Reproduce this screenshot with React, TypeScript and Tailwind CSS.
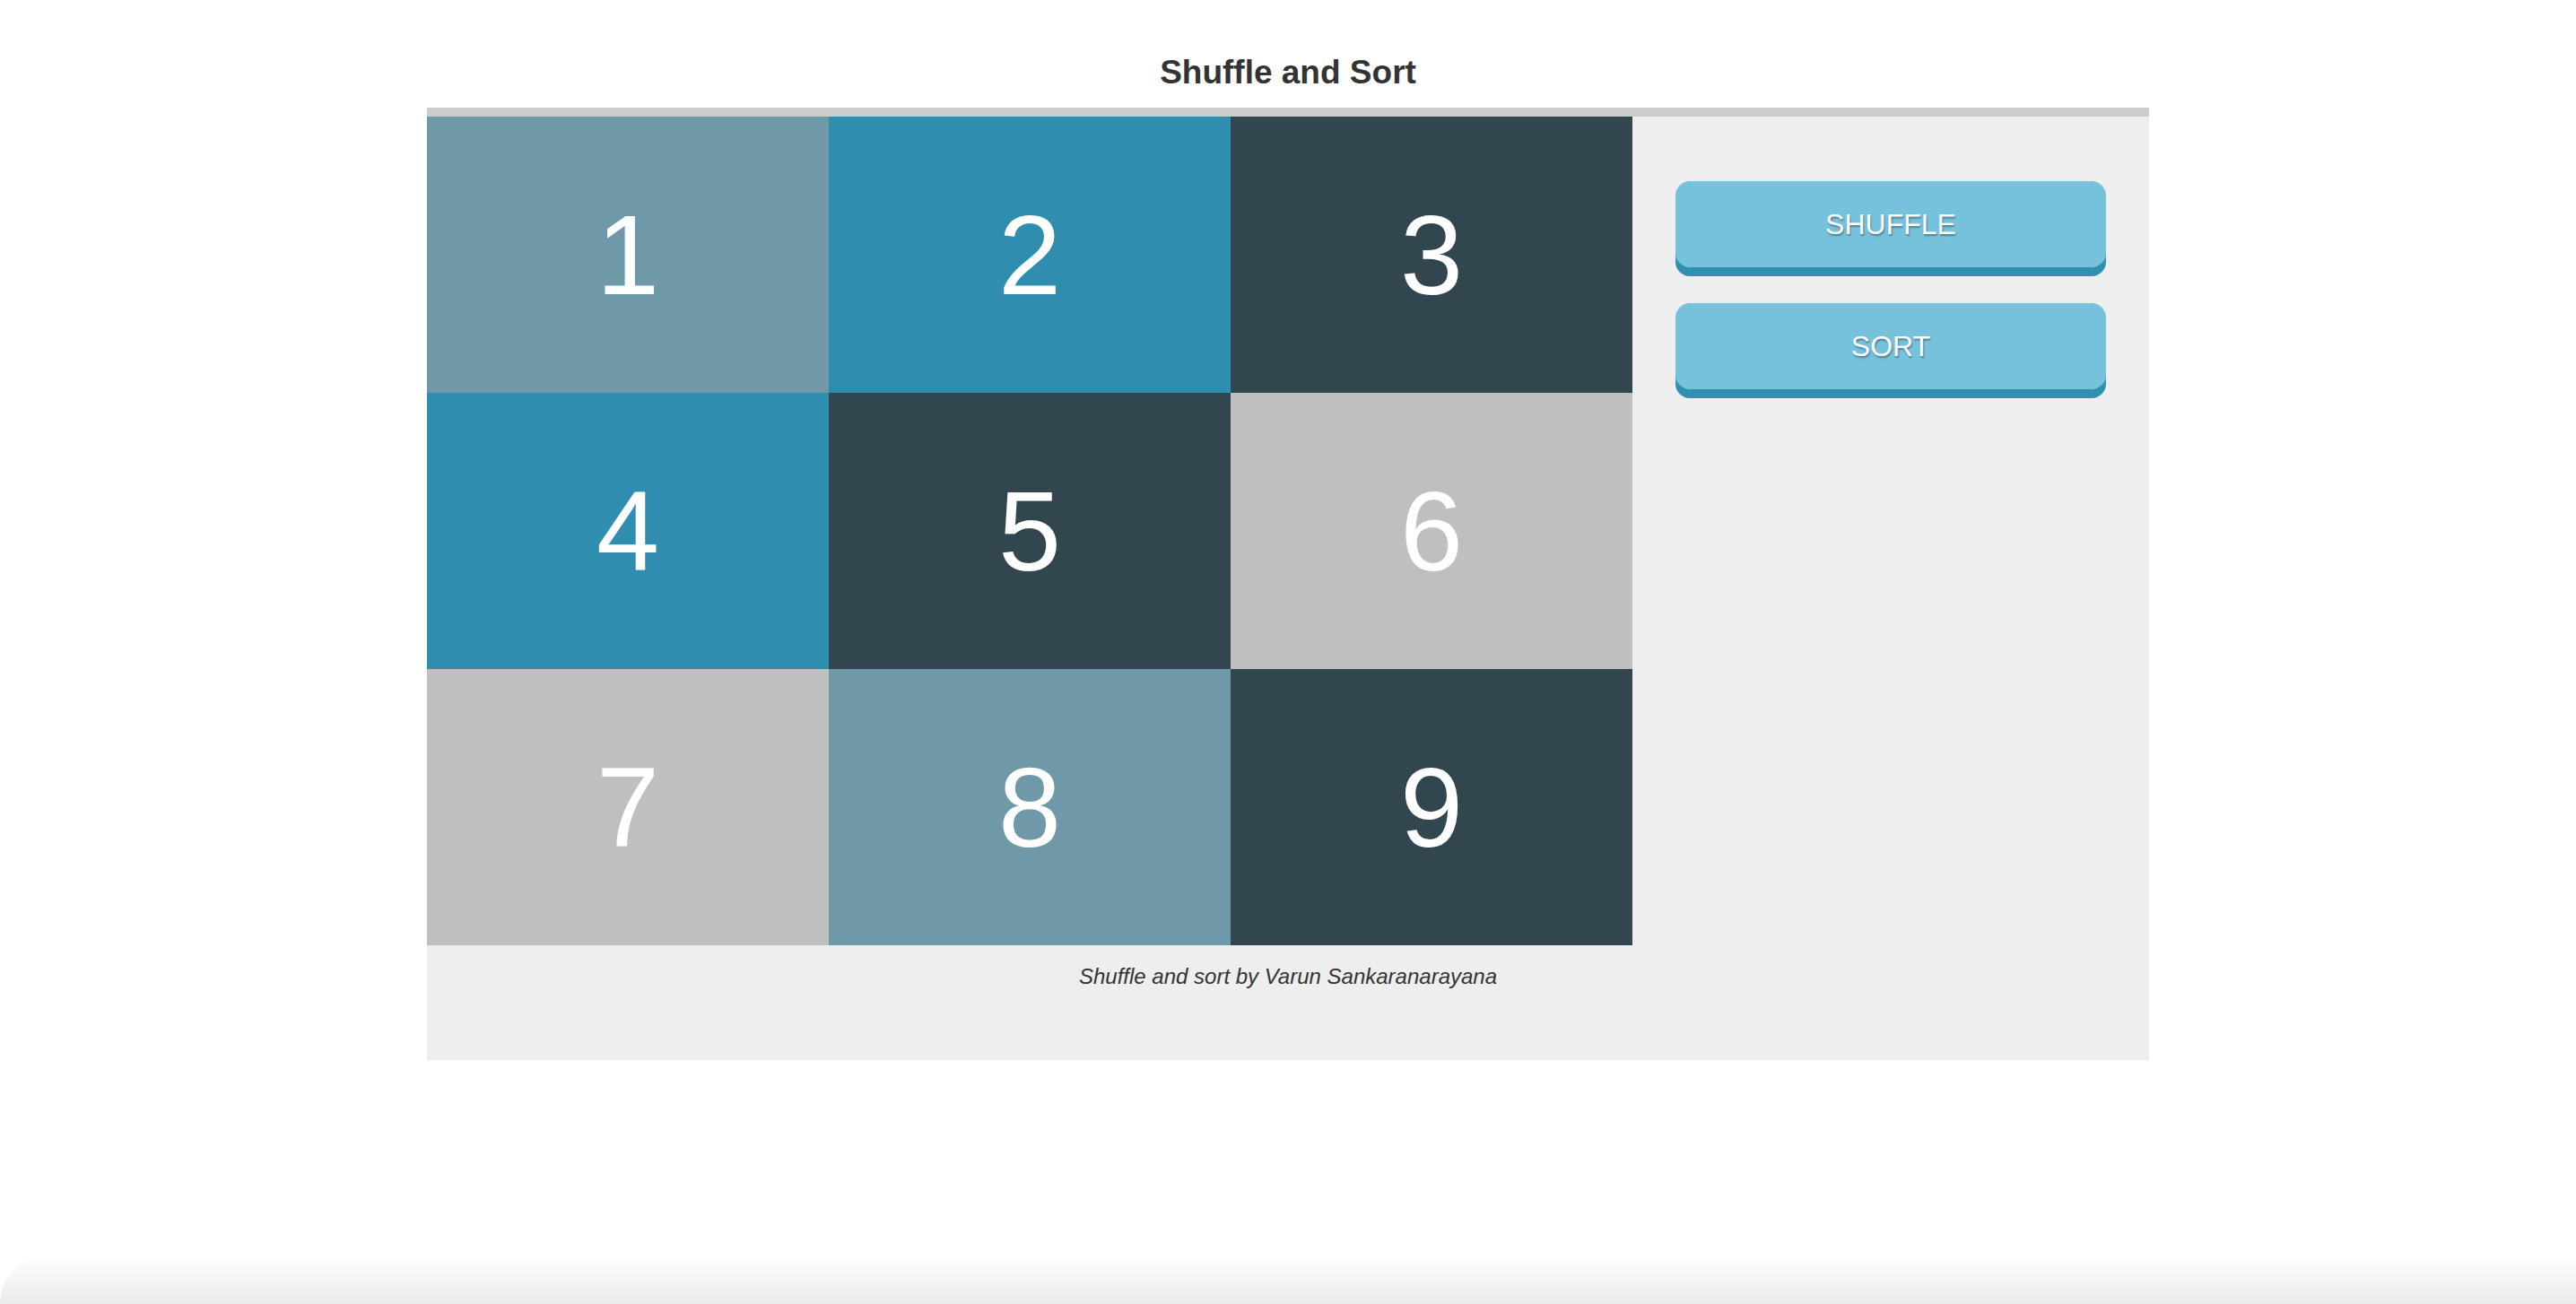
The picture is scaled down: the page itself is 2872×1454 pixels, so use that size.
const cards = [
  { n: 1, color: "bg-[#6f98a8]" },
  { n: 2, color: "bg-[#2f8eb0]" },
  { n: 3, color: "bg-[#32464f]" },
  { n: 4, color: "bg-[#2f8eb0]" },
  { n: 5, color: "bg-[#32464f]" },
  { n: 6, color: "bg-[#bfbfbf]" },
  { n: 7, color: "bg-[#bfbfbf]" },
  { n: 8, color: "bg-[#6f98a8]" },
  { n: 9, color: "bg-[#32464f]" },
];

function ActionButton({ label }: { label: string }): JSX.Element {
  return (
    <button className="h-[96px] w-full rounded-[16px] bg-[#76c2dc] shadow-[0_10px_0_#318fb0] text-[32px] text-white [text-shadow:1px_2px_2px_rgba(0,0,0,0.35)]">
      {label}
    </button>
  );
}

export default function App(): JSX.Element {
  return (
    <div className="min-h-screen bg-white flex flex-col font-['Liberation_Sans',Arial,sans-serif]">
      <h1 className="mt-[60px] mb-[18px] text-center text-[37px] leading-[42px] font-bold text-[#333]">
        Shuffle and Sort
      </h1>
      <div className="mx-auto w-[1920px] border-t-[10px] border-[#cccccc] bg-[#eeeeee]">
        <div className="flex">
          <div className="grid grid-cols-3 w-[1344px]">
            {cards.map((c) => (
              <div
                key={c.n}
                className={`${c.color} h-[308px] flex items-center justify-center text-white text-[126px]`}
              >
                {c.n}
              </div>
            ))}
          </div>
          <div className="flex-1 px-[48px] pt-[72px] flex flex-col gap-[40px]">
            <ActionButton label="SHUFFLE" />
            <ActionButton label="SORT" />
          </div>
        </div>
        <footer className="h-[128px] pt-[17px] text-center italic text-[24px] text-[#333]">
          Shuffle and sort by Varun Sankaranarayana
        </footer>
      </div>
      <div className="flex-1" />
      <div className="h-[56px] bg-gradient-to-b from-white to-[#ebebeb] rounded-tl-[80px]" />
    </div>
  );
}
